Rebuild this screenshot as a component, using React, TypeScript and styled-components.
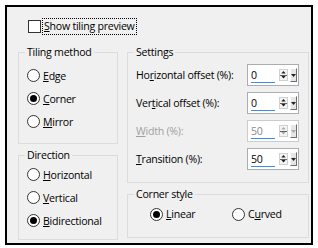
import React from 'react';
import styled, { createGlobalStyle } from 'styled-components';

const GlobalStyle = createGlobalStyle`
  html, body {
    margin: 0;
    padding: 0;
    background: #ffffff;
  }

  body {
    font-family: 'Open Sans', 'Liberation Sans', sans-serif;
    font-size: 10.6px;
    letter-spacing: -0.25px;
    color: #000000;
  }
`;

const Page = styled.div`
  width: 318px;
  height: 248px;
  padding: 5px;
  box-sizing: border-box;
  background: #ffffff;
`;

const Dialog = styled.div`
  width: 308px;
  height: 240px;
  box-sizing: border-box;
  border: 2px solid #000000;
  background: #f0f0f0;
  display: flex;
  flex-direction: column;
`;

const PreviewRow = styled.label`
  display: flex;
  align-items: center;
  gap: 2px;
  height: 15px;
  margin: 12px 0 0 21px;
`;

const CheckBox = styled.span`
  width: 13px;
  height: 13px;
  box-sizing: border-box;
  border: 1px solid #333333;
  background: #ffffff;
`;

const FocusText = styled.span`
  outline: 1px dotted #000000;
  outline-offset: 0;
  padding: 0 1px;
  line-height: 15px;
`;

const Columns = styled.div`
  display: grid;
  grid-template-columns: 100px 182px;
  column-gap: 9px;
  margin-top: 11px;
  padding-left: 11px;
`;

const Column = styled.div`
  display: flex;
  flex-direction: column;
  gap: 4px;
`;

const Group = styled.fieldset<{ $height: number; $padTop: number }>`
  margin: 0;
  min-width: 0;
  box-sizing: border-box;
  height: ${({ $height }) => $height}px;
  border: 1px solid #dcdcdc;
  padding: ${({ $padTop }) => $padTop}px 0 0 8px;
`;

const Legend = styled.legend`
  padding: 0 2px;
  margin-left: -2px;
  line-height: 15px;
`;

const RadioList = styled.div<{ $row: number }>`
  display: flex;
  flex-direction: column;

  & > label {
    height: ${({ $row }) => $row}px;
  }
`;

const RadioItem = styled.label<{ $width?: number }>`
  display: flex;
  align-items: center;
  gap: 3px;
  width: ${({ $width }) => ($width ? `${$width}px` : 'auto')};
`;

const RadioDot = styled.span<{ $checked?: boolean }>`
  width: 13px;
  height: 13px;
  box-sizing: border-box;
  border-radius: 50%;
  border: 1px solid #333333;
  background: #ffffff;
  display: inline-flex;
  align-items: center;
  justify-content: center;
  flex-shrink: 0;

  &::after {
    content: '';
    width: 7px;
    height: 7px;
    border-radius: 50%;
    background: ${({ $checked }) => ($checked ? '#000000' : 'transparent')};
  }
`;

const InlineRadios = styled.div`
  display: flex;
  align-items: center;
  height: 20px;
  margin-left: 14px;
`;

const SettingRow = styled.div<{ $disabled?: boolean }>`
  display: grid;
  grid-template-columns: 111px auto;
  align-items: center;
  height: 28px;
  color: ${({ $disabled }) => ($disabled ? '#a0a0a0' : '#000000')};
`;

const Spin = styled.div`
  display: flex;
  height: 22px;
`;

const Field = styled.div<{ $disabled?: boolean }>`
  width: 30px;
  box-sizing: border-box;
  border: 1px solid ${({ $disabled }) => ($disabled ? '#cccccc' : '#abadb3')};
  border-right: none;
  background: #ffffff;
  display: flex;
  flex-direction: column;
  justify-content: space-between;
  padding: 3px 1px 2px 3px;
  color: ${({ $disabled }) => ($disabled ? '#8a8a8a' : '#000000')};
  line-height: 14px;
`;

const Underline = styled.div`
  height: 2px;
  margin-right: 1px;
  background: #3a8ee6;
`;

const SpinButtons = styled.div<{ $disabled?: boolean }>`
  display: flex;
  align-items: center;
  gap: 2px;
  width: 22px;
  box-sizing: border-box;
  border: 1px solid ${({ $disabled }) => ($disabled ? '#cccccc' : '#abadb3')};
  border-left: none;
  background: #ffffff;
  padding: 0 1px 0 2px;
`;

const UpDown = styled.div`
  display: flex;
  flex-direction: column;
  align-items: center;
  width: 9px;
  height: 12px;
  box-sizing: border-box;
  border: 1px solid #d0d0d0;
  background: #f4f4f4;
`;

const Divider = styled.div`
  width: 7px;
  height: 1px;
  background: #606060;
`;

const DropButton = styled.div`
  width: 8px;
  height: 14px;
  box-sizing: border-box;
  border-top: 1px solid #ffffff;
  border-left: 1px solid #ffffff;
  border-right: 1px solid #6d6d6d;
  border-bottom: 1px solid #6d6d6d;
  background: #e6e6e6;
  display: flex;
  align-items: center;
  justify-content: center;
`;

const Arrow = ({ up, color }: { up?: boolean; color: string }) => (
  <svg width="5" height="3" viewBox="0 0 5 3" style={{ display: 'block', margin: '1px 0' }}>
    <polygon points={up ? '0,3 5,3 2.5,0' : '0,0 5,0 2.5,3'} fill={color} />
  </svg>
);

const Spinner = ({ value, disabled }: { value: string; disabled?: boolean }) => {
  const ink = disabled ? '#a8a8a8' : '#202020';
  return (
    <Spin>
      <Field $disabled={disabled}>
        <span>{value}</span>
        <Underline />
      </Field>
      <SpinButtons $disabled={disabled}>
        <UpDown>
          <Arrow up color={ink} />
          <Divider />
          <Arrow color={ink} />
        </UpDown>
        <DropButton>
          <Arrow color={ink} />
        </DropButton>
      </SpinButtons>
    </Spin>
  );
};

const Radio = ({ checked, children, width }: { checked?: boolean; children: React.ReactNode; width?: number }) => (
  <RadioItem $width={width}>
    <RadioDot $checked={checked} />
    <span>{children}</span>
  </RadioItem>
);

const App = () => {
  return (
    <Page>
      <GlobalStyle />
      <Dialog>
        <PreviewRow>
          <CheckBox />
          <FocusText>
            <u>S</u>how tiling preview
          </FocusText>
        </PreviewRow>

        <Columns>
          <Column>
            <Group $height={99} $padTop={4}>
              <Legend>Tiling method</Legend>
              <RadioList $row={23}>
                <Radio><u>E</u>dge</Radio>
                <Radio checked><u>C</u>orner</Radio>
                <Radio><u>M</u>irror</Radio>
              </RadioList>
            </Group>
            <Group $height={92} $padTop={0}>
              <Legend>Direction</Legend>
              <RadioList $row={23}>
                <Radio><u>H</u>orizontal</Radio>
                <Radio><u>V</u>ertical</Radio>
                <Radio checked><u>B</u>idirectional</Radio>
              </RadioList>
            </Group>
          </Column>

          <Column>
            <Group $height={138} $padTop={1}>
              <Legend>Settings</Legend>
              <SettingRow>
                <span>Ho<u>r</u>izontal offset (%):</span>
                <Spinner value="0" />
              </SettingRow>
              <SettingRow>
                <span>Ver<u>t</u>ical offset (%):</span>
                <Spinner value="0" />
              </SettingRow>
              <SettingRow $disabled>
                <span><u>W</u>idth (%):</span>
                <Spinner value="50" disabled />
              </SettingRow>
              <SettingRow>
                <span><u>T</u>ransition (%):</span>
                <Spinner value="50" />
              </SettingRow>
            </Group>
            <Group $height={51} $padTop={2}>
              <Legend>Corner style</Legend>
              <InlineRadios>
                <Radio checked width={82}><u>L</u>inear</Radio>
                <Radio>C<u>u</u>rved</Radio>
              </InlineRadios>
            </Group>
          </Column>
        </Columns>
      </Dialog>
    </Page>
  );
};

export default App;
